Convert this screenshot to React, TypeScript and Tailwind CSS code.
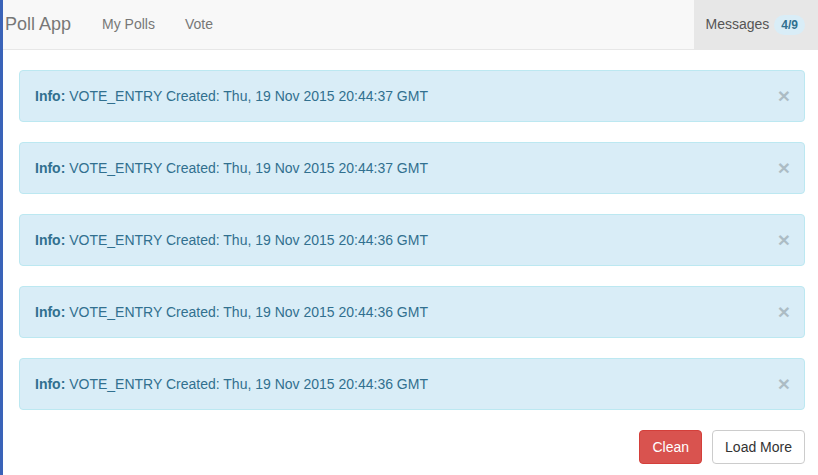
const messages = [
  'Thu, 19 Nov 2015 20:44:37 GMT',
  'Thu, 19 Nov 2015 20:44:37 GMT',
  'Thu, 19 Nov 2015 20:44:36 GMT',
  'Thu, 19 Nov 2015 20:44:36 GMT',
  'Thu, 19 Nov 2015 20:44:36 GMT',
];

function Navbar() {
  return (
    <nav className="flex h-[50px] items-stretch border-b border-[#e7e7e7] bg-[#f8f8f8]">
      <a className="flex items-center pl-[2px] pr-[16px] text-[18px] text-[#777]">Poll App</a>
      <a className="flex items-center px-[15px] text-[14px] text-[#777]">My Polls</a>
      <a className="flex items-center px-[15px] text-[14px] text-[#777]">Vote</a>
      <div className="ml-auto flex items-center gap-[5px] bg-[#e7e7e7] pl-[12px] pr-[13px] text-[14px] text-[#555]">
        Messages
        <span className="rounded-full bg-[#d9edf7] px-[7px] py-[4px] text-[12px] font-bold leading-none text-[#31708f]">
          4/9
        </span>
      </div>
    </nav>
  );
}

function Alert({ text }: { text: string }) {
  return (
    <div className="flex items-center rounded-[4px] border border-[#bce8f1] bg-[#d9edf7] py-[15px] pl-[15px] pr-[14px] text-[14px] leading-[20px] text-[#31708f]">
      <span>
        <strong>Info:</strong> VOTE_ENTRY Created: {text}
      </span>
      <button className="ml-auto text-[21px] font-bold leading-[20px] text-black opacity-20">×</button>
    </div>
  );
}

export default function App() {
  return (
    <div className="min-h-[475px] border-l-[3px] border-[#3a63b8] bg-white font-['Liberation_Sans',Arial,sans-serif]">
      <Navbar />
      <div className="flex flex-col gap-[20px] pl-[16px] pr-[13px] pt-[20px]">
        {messages.map((m, i) => (
          <Alert key={i} text={m} />
        ))}
        <div className="flex justify-end gap-[10px]">
          <button className="h-[34px] rounded-[4px] border border-[#d43f3a] bg-[#d9534f] px-[12px] text-[14px] text-white">
            Clean
          </button>
          <button className="h-[34px] rounded-[4px] border border-[#ccc] bg-white px-[12px] text-[14px] text-[#333]">
            Load More
          </button>
        </div>
      </div>
    </div>
  );
}
